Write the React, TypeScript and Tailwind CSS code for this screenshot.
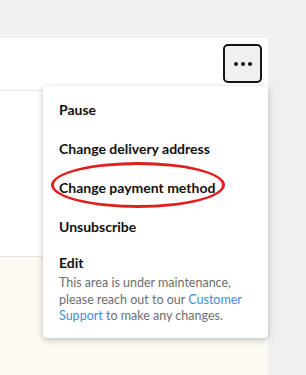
import React from 'react';

const items = ['Pause', 'Change delivery address', 'Change payment method', 'Unsubscribe'];

const App: React.FC = () => {
  return (
    <div className="min-h-screen bg-[#f0f0f0] pt-[38px] pr-[38px] font-['Lato',sans-serif]">
      <div className="relative bg-white rounded-tr-[4px] h-[337px] flex flex-col">
        {/* Header row */}
        <div className="h-[53px] border-b border-[#e6e6e6] flex justify-end items-start pt-[6px] pr-[6px]">
          <button className="w-[39px] h-[39px] rounded-[5px] border-2 border-[#151515] bg-[#f0f0f0] flex items-center justify-center gap-[3px]">
            <span className="w-[4px] h-[4px] rounded-full bg-[#111]" />
            <span className="w-[4px] h-[4px] rounded-full bg-[#111]" />
            <span className="w-[4px] h-[4px] rounded-full bg-[#111]" />
          </button>
        </div>
        <div className="h-[166px] border-b border-[#e6e6e6]" />
        <div className="flex-1 bg-[#fdfaf3]" />

        {/* Dropdown menu */}
        <div className="absolute left-[43px] right-0 top-[48px] bg-white rounded-[4px] shadow-[0_2px_6px_rgba(0,0,0,0.25)] pl-[16px] pr-[12px] pt-[4px] pb-[13px]">
          <ul className="flex flex-col">
            {items.map((label) => (
              <li key={label} className="relative h-[39px] flex items-center text-[14px] font-bold text-[#111]">
                {label}
                {label === 'Change payment method' && (
                  <span className="absolute left-[-8px] top-[-6px] w-[174px] h-[46px] rounded-[50%] border-[3px] border-[#e0201f]" />
                )}
              </li>
            ))}
          </ul>
          <div className="pt-[9px]">
            <div className="text-[14px] font-bold text-[#111] leading-[16px]">Edit</div>
            <p className="mt-[4px] text-[12.5px] leading-[16.5px] text-[#6e6e6e]">
              This area is under maintenance, please reach out to our{' '}
              <a className="text-[#3d8ee8]">Customer Support</a> to make any changes.
            </p>
          </div>
        </div>
      </div>
    </div>
  );
};

export default App;
